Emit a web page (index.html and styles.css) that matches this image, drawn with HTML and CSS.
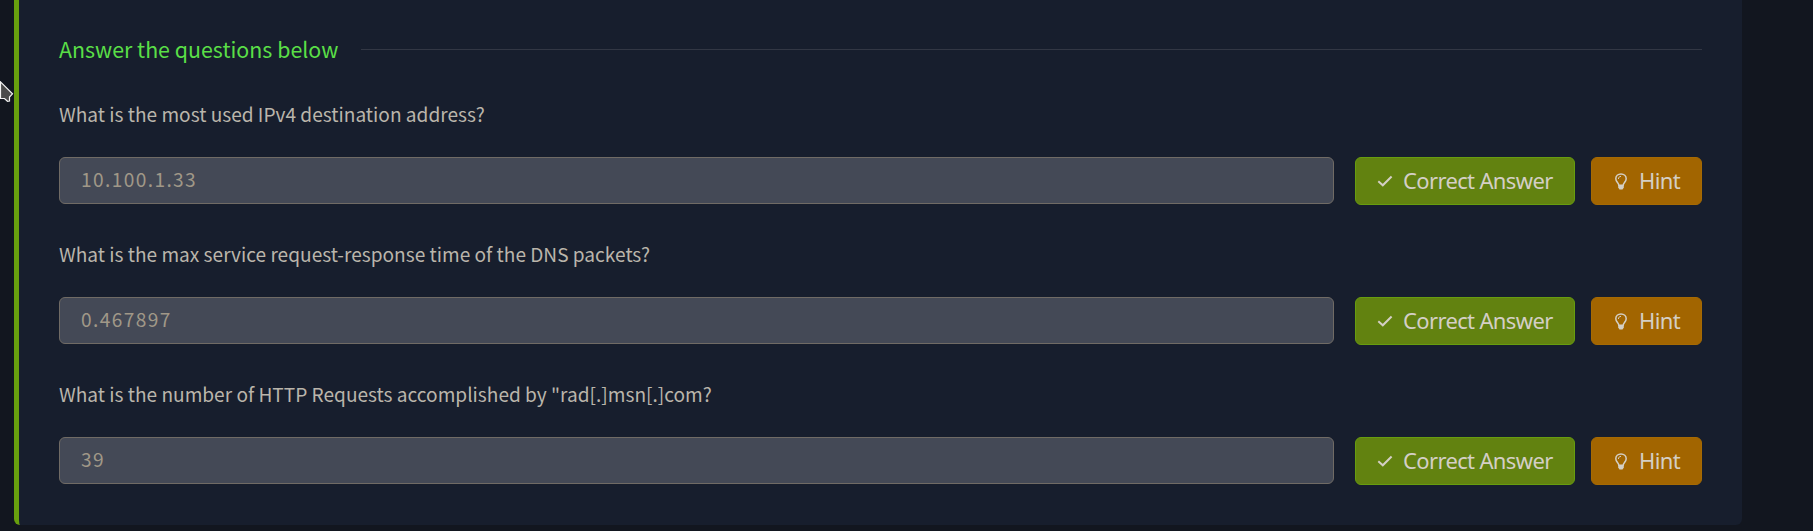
FILE: index.html
```html
<!DOCTYPE html>
<html lang="en">
<head>
<meta charset="utf-8">
<title>Questions</title>
<link rel="stylesheet" href="styles.css">
</head>
<body>
<svg class="defs" width="0" height="0" aria-hidden="true">
  <symbol id="check" viewBox="0 0 16 14"><path d="M1.3 7.3 L5.8 11.3 L14.6 2.5" fill="none" stroke="currentColor" stroke-width="2"/></symbol>
  <symbol id="bulb" viewBox="0 0 12 17"><path d="M3.8 12.2 C3.8 9.8 .8 9 .8 5.8 C.8 2.9 3 .9 6 .9 S11.2 2.9 11.2 5.8 C11.2 9 8.2 9.8 8.2 12.2 Z" fill="none" stroke="currentColor" stroke-width="1.5"/><path d="M3.4 6 C3.4 4.4 4.4 3.4 6 3.4" fill="none" stroke="currentColor" stroke-width="1"/><path d="M3.2 12.8 H8.8 V14.6 L7.5 16.5 H4.5 L3.2 14.6 Z" fill="currentColor"/></symbol>
</svg>
<main class="card">
  <header class="heading"><h2 class="title">Answer the questions below</h2><div class="rule"></div></header>
  <section class="item">
    <p class="question">What is the most used IPv4 destination address?</p>
    <div class="row"><div class="answer">10.100.1.33</div>
      <button class="btn correct"><svg class="check"><use href="#check"/></svg><span class="label">Correct Answer</span></button>
      <button class="btn hint"><svg class="bulb"><use href="#bulb"/></svg><span class="label">Hint</span></button></div>
  </section>
  <section class="item">
    <p class="question">What is the max service request-response time of the DNS packets?</p>
    <div class="row"><div class="answer">0.467897</div>
      <button class="btn correct"><svg class="check"><use href="#check"/></svg><span class="label">Correct Answer</span></button>
      <button class="btn hint"><svg class="bulb"><use href="#bulb"/></svg><span class="label">Hint</span></button></div>
  </section>
  <section class="item">
    <p class="question">What is the number of HTTP Requests accomplished by "rad[.]msn[.]com?</p>
    <div class="row"><div class="answer">39</div>
      <button class="btn correct"><svg class="check"><use href="#check"/></svg><span class="label">Correct Answer</span></button>
      <button class="btn hint"><svg class="bulb"><use href="#bulb"/></svg><span class="label">Hint</span></button></div>
  </section>
</main>
<svg class="cursor" width="14" height="22" viewBox="0 0 14 22"><path d="M.5 .8 L12.5 12.8 L9.5 16 V20 L7.5 20.3 L4.5 17.5 H.5 Z" fill="#4b4b4b" stroke="#f2f2f2" stroke-width="1.2"/></svg>
</body>
</html>
```
FILE: styles.css
```css
* { box-sizing: border-box; }
body {
  margin: 0;
  height: 531px;
  overflow: hidden;
  background: #12161f;
  font-family: "Noto Sans CJK SC", "Noto Sans", sans-serif;
}
.defs { display: none; }
.card {
  width: 1728px;
  height: 525px;
  margin-left: 14px;
  padding: 30px 40px 0;
  border-left: 5px solid #689f0e;
  border-radius: 0 0 6px 6px;
  background: #171e2d;
}
.heading { display: flex; align-items: center; gap: 22px; height: 39px; }
.title { width: 280px; margin: 0; font-size: 21.4px; font-weight: 400; line-height: 37px; padding-bottom: 2px; color: #5adf47; white-space: nowrap; }
.rule { flex: 1; height: 1px; background: #323744; }
.item { height: 140px; padding-top: 30px; }
.question { height: 30px; margin: 0 0 28px; font-size: 19.1px; line-height: 30px; color: #bab5ab; white-space: nowrap; }
.row { display: flex; }
.answer {
  width: 1275px;
  height: 47px;
  margin-right: 21px;
  padding-left: 21px;
  border: 1px solid #706b65;
  border-radius: 6px;
  background: #444956;
  color: #a09888;
  font-size: 19.1px;
  line-height: 43px;
  letter-spacing: 1.4px;
}
.btn {
  display: flex;
  align-items: center;
  height: 48px;
  padding: 0 0 0 21px;
  border: 1px solid;
  border-radius: 6px;
  color: #d4cfc5;
  font: 22px "Noto Sans", sans-serif;
  letter-spacing: -0.64px;
  white-space: nowrap;
}
.label { padding-bottom: 3px; }
.correct { width: 220px; margin-right: 16px; border-color: #679d0e; background: #628210; }
.hint { width: 111px; padding-left: 23px; border-color: #a66a02; background: #a26500; }
.check { width: 16px; height: 14px; margin-right: 10px; }
.bulb { width: 12px; height: 17px; margin-right: 12px; }
.cursor { position: absolute; left: 0; top: 81px; }
```
